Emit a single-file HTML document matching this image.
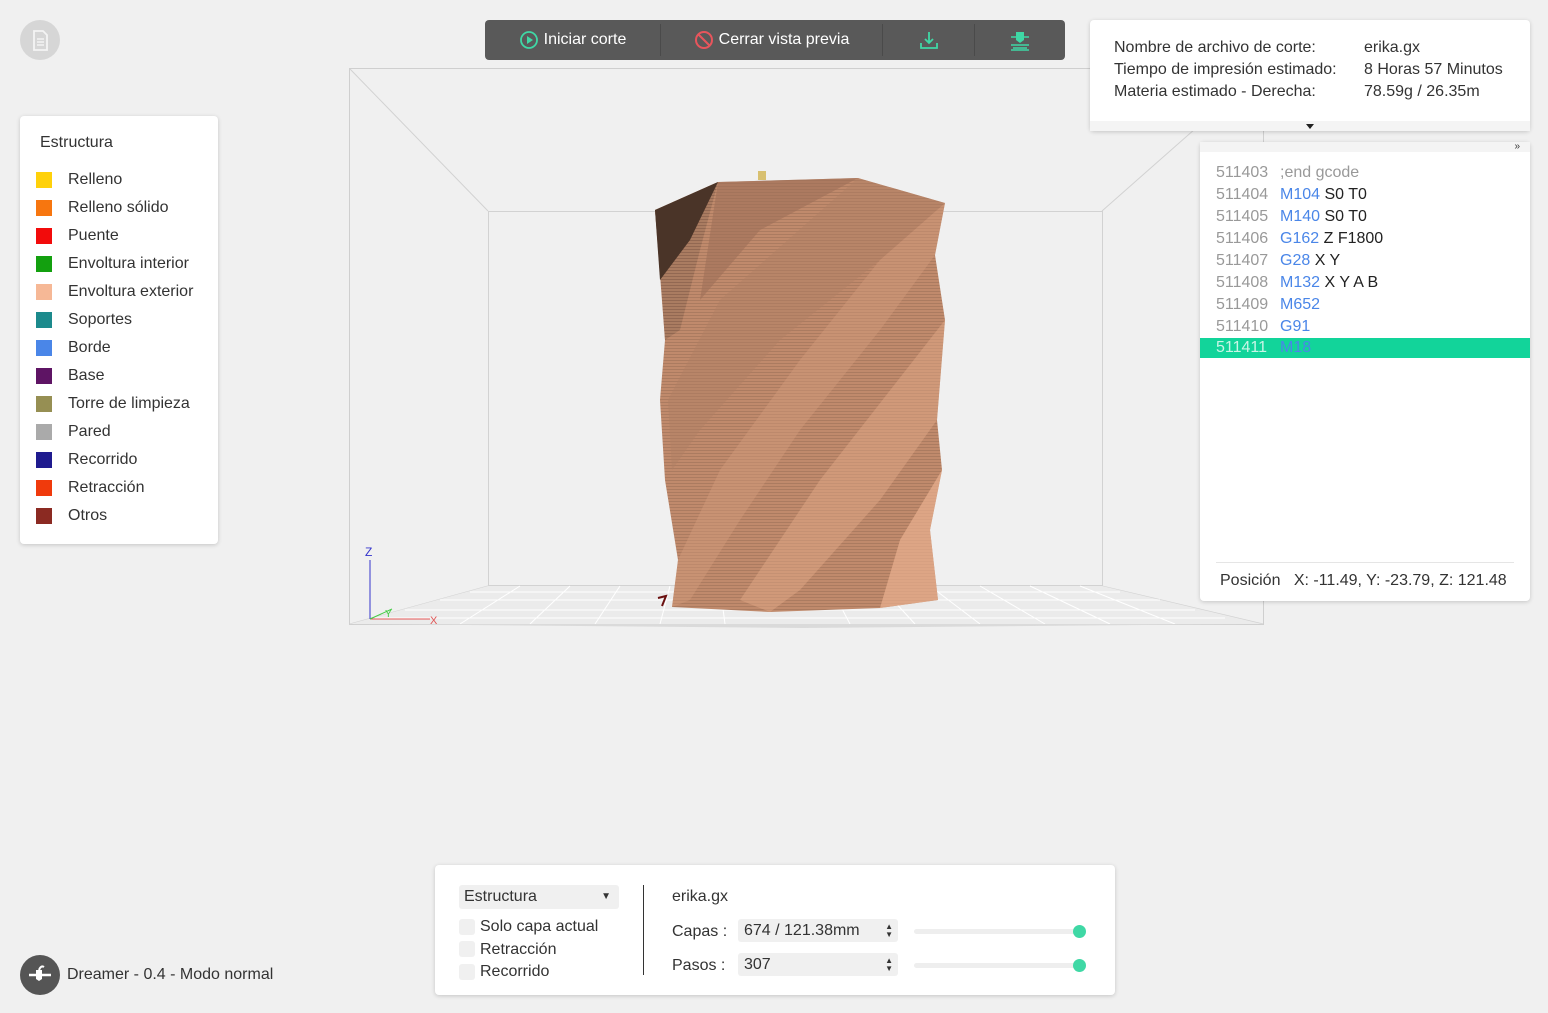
<!DOCTYPE html>
<html><head><meta charset="utf-8"><style>
*{box-sizing:border-box;margin:0;padding:0}
body{width:1548px;height:1013px;background:#f0f0f0;font-family:"Liberation Sans","Noto Sans CJK SC",sans-serif;color:#333;position:relative;overflow:hidden;font-size:15px}
.card{position:absolute;background:#fff;border-radius:4px;box-shadow:0 1px 4px rgba(0,0,0,.18)}
.leg div{height:28px;display:flex;align-items:center;font-size:16px}
.leg span{width:16px;height:16px;margin:0 16px 0 16px;display:inline-block}
.tb{position:absolute;left:485px;top:20px;width:580px;height:40px;background:#595959;border-radius:4px;color:#fff;display:flex;align-items:center;font-size:16px}
.tb .s{border-left:1px solid #4a4a4a;height:32px}
.gc div{height:22px;line-height:22px;font-size:16px;padding-left:16px}
.gc .n{color:#999;display:inline-block;width:64px}
.gc .b{color:#4a86e8}
.gc .t{color:#222}
.cb{display:inline-block;width:16px;height:16px;background:#f0f0f0;border-radius:3px;vertical-align:middle;margin-right:5px}
.inp{position:absolute;background:#f0f0f0;border-radius:3px;height:23px;line-height:23px;padding-left:6px;width:160px;font-size:16px}
.sl{position:absolute;height:5px;background:#eee;border-radius:3px;width:170px}
.sl i{position:absolute;right:-2px;top:-4px;width:13px;height:13px;border-radius:50%;background:#3fd8a5}
</style></head><body>
<div style="position:absolute;left:20px;top:20px;width:40px;height:40px;border-radius:50%;background:#d6d6d6">
<svg width="40" height="40"><path d="M14 11h9l4 4v15h-13z" fill="none" stroke="#f4f4f4" stroke-width="1.8"/><path d="M17 19h7M17 22h7M17 25h7" stroke="#f4f4f4" stroke-width="1.6"/></svg></div>

<div class="card leg" style="left:20px;top:116px;width:198px;height:428px;padding-top:12px">
<div style="padding-left:20px;height:30px;margin-bottom:8px">Estructura</div>
<div><span style="background:#ffd10a"></span>Relleno</div>
<div><span style="background:#f7760f"></span>Relleno sólido</div>
<div><span style="background:#f20b0b"></span>Puente</div>
<div><span style="background:#13a00f"></span>Envoltura interior</div>
<div><span style="background:#f6b896"></span>Envoltura exterior</div>
<div><span style="background:#1c8a8c"></span>Soportes</div>
<div><span style="background:#4a86e8"></span>Borde</div>
<div><span style="background:#5e1464"></span>Base</div>
<div><span style="background:#968f53"></span>Torre de limpieza</div>
<div><span style="background:#aaaaaa"></span>Pared</div>
<div><span style="background:#1f1b8f"></span>Recorrido</div>
<div><span style="background:#f03a0c"></span>Retracción</div>
<div><span style="background:#8b2a22"></span>Otros</div>
</div>

<svg style="position:absolute;left:0;top:0" width="1548" height="1013">
<defs><pattern id="st" width="4" height="3" patternUnits="userSpaceOnUse"><rect width="4" height="3" fill="#c08a6c"/><rect width="4" height="1" fill="#ab7b60"/></pattern>
<pattern id="st2" width="4" height="3" patternUnits="userSpaceOnUse"><rect width="4" height="3" fill="#a87a60"/><rect width="4" height="1" fill="#8f6650"/></pattern></defs>
<rect x="349.5" y="68.5" width="914" height="556" fill="#f0f0f0" stroke="#cfcfcf"/>
<rect x="488.5" y="211.5" width="614" height="374" fill="none" stroke="#d2d2d2"/>
<path d="M350 69L488 211M1263 69L1102 211M350 624L488 586M1263 624L1102 586" stroke="#d2d2d2"/>
<path d="M488 586h614l160 38H350z" fill="#ebebeb"/>
<g stroke="#fff" stroke-width="1"><path d="M470 592h650M440 600h720M405 610h790M375 618h850"/>
<path d="M520 586l-60 38M570 586l-40 38M620 586l-25 38M670 586l-10 38M720 586l5 38M830 586l20 38M880 586l35 38M930 586l50 38M980 586l65 38M1030 586l80 38M1080 586l95 38"/></g>
<path d="M350 624h913l-460 4z" fill="#dadada"/>
<path d="M370 560V619" stroke="#3333cc"/><path d="M370 619H430" stroke="#e05555"/><path d="M370 619l22-10" stroke="#44cc44"/>
<text x="365" y="556" fill="#3333cc" font-size="12">Z</text><text x="430" y="624" fill="#e05555" font-size="11">X</text><text x="385" y="617" fill="#44cc44" font-size="10">Y</text>
<path d="M658 598l8-2-4 10" stroke="#6b1010" stroke-width="2" fill="none"/>
<path d="M655 210L718 182L858 178L945 203L935 255L945 320L937 420L942 470L930 530L938 600L880 608L770 612L672 607L678 560L665 480L660 400L665 340Z" fill="url(#st)"/>
<path d="M655 210L718 182L700 250L680 330L665 340L660 270Z" fill="url(#st2)" opacity=".9"/>
<path d="M655 210L718 182L690 240L660 280Z" fill="#4a3428"/>
<path d="M718 182L858 178L760 230L700 300Z" fill="#9e7058" opacity=".6"/>
<path d="M858 178L945 203L880 260L780 340L700 430L672 470L668 400L720 300Z" fill="#b07f63" opacity=".45"/>
<path d="M945 203L935 255L880 330L800 430L740 520L690 600L672 607L678 560L720 470L800 360L880 260Z" fill="#d39c7c" opacity=".45"/>
<path d="M945 320L937 420L880 500L800 590L770 612L740 600L820 480Z" fill="#e0a886" opacity=".5"/>
<path d="M942 470L930 530L938 600L880 608L900 540Z" fill="#eab090" opacity=".7"/>
<rect x="758" y="171" width="8" height="9" fill="#d8c070"/>
</svg>

<div class="tb">
<div style="width:175px;display:flex;align-items:center;justify-content:center"><svg width="20" height="20" style="margin-right:5px"><circle cx="10" cy="10" r="8" fill="none" stroke="#3fd8a5" stroke-width="1.8"/><path d="M8 6v8l6-4z" fill="#3fd8a5"/></svg>Iniciar corte</div>
<div class="s"></div>
<div style="width:221px;display:flex;align-items:center;justify-content:center"><svg width="20" height="20" style="margin-right:5px"><circle cx="10" cy="10" r="8" fill="none" stroke="#e8555c" stroke-width="2"/><path d="M4.5 4.5l11 11" stroke="#e8555c" stroke-width="2"/></svg>Cerrar vista previa</div>
<div class="s"></div>
<div style="width:91px;display:flex;justify-content:center"><svg width="20" height="20"><path d="M10 2v11M6 9l4 4 4-4M2 13v5h16v-5" fill="none" stroke="#3fd8a5" stroke-width="1.8"/></svg></div>
<div class="s"></div>
<div style="width:90px;display:flex;justify-content:center"><svg width="24" height="24"><path d="M8 4h8v8l-4 3-4-3z" fill="#3fd8a5"/><path d="M3 9h18M3 17h18M5 20h14M3 22h18" stroke="#3fd8a5" stroke-width="1.5"/></svg></div>
</div>

<div class="card" style="left:1090px;top:20px;width:440px;height:111px;line-height:22px;padding:17px 0 0 24px;font-size:16px">
<div style="display:flex"><div style="width:250px">Nombre de archivo de corte:</div><div>erika.gx</div></div>
<div style="display:flex"><div style="width:250px">Tiempo de impresión estimado:</div><div>8 Horas 57 Minutos</div></div>
<div style="display:flex"><div style="width:250px">Materia estimado - Derecha:</div><div>78.59g / 26.35m</div></div>
<div style="position:absolute;left:0;right:0;bottom:0;height:10px;background:#f4f4f4"></div>
<div style="position:absolute;left:216px;bottom:2px;width:0;height:0;border-left:4px solid transparent;border-right:4px solid transparent;border-top:5px solid #222"></div>
</div>

<div class="card gc" style="left:1200px;top:142px;width:330px;height:459px;padding-top:20px">
<div style="position:absolute;left:0;right:0;top:0;height:10px;background:#f4f4f4;font-size:10px;line-height:10px;text-align:right;padding-right:10px">»</div>
<div><span class="n">511403</span><span style="color:#999">;end gcode</span></div>
<div><span class="n">511404</span><span class="b">M104</span> <span class="t">S0 T0</span></div>
<div><span class="n">511405</span><span class="b">M140</span> <span class="t">S0 T0</span></div>
<div><span class="n">511406</span><span class="b">G162</span> <span class="t">Z F1800</span></div>
<div><span class="n">511407</span><span class="b">G28</span> <span class="t">X Y</span></div>
<div><span class="n">511408</span><span class="b">M132</span> <span class="t">X Y A B</span></div>
<div><span class="n">511409</span><span class="b">M652</span></div>
<div><span class="n">511410</span><span class="b">G91</span></div>
<div style="background:#12d49a;height:20px;line-height:20px"><span class="n" style="color:#c8f5e6">511411</span><span class="b">M18</span></div>
<div style="position:absolute;left:16px;right:16px;top:420px;border-top:1px solid #e5e5e5"></div>
<div style="position:absolute;left:20px;top:428px;padding:0;color:#333">Posición&nbsp;&nbsp;&nbsp;X: -11.49, Y: -23.79, Z: 121.48</div>
</div>

<div style="position:absolute;left:20px;top:955px;width:40px;height:40px;border-radius:50%;background:#555"><svg width="40" height="40"><path d="M9 20h22" stroke="#fff" stroke-width="2.5"/><path d="M16 15h6v9l-3 2-3-2z" fill="#fff"/><path d="M19 15q2-5 5-3" stroke="#fff" stroke-width="2" fill="none"/></svg></div>
<div style="position:absolute;left:67px;top:966px;font-size:16px">Dreamer - 0.4 - Modo normal</div>

<div class="card" style="left:435px;top:865px;width:680px;height:130px;font-size:16px">
<div style="position:absolute;left:24px;top:20px;width:160px;height:24px;background:#f0f0f0;border-radius:3px;line-height:24px;padding-left:5px">Estructura<span style="position:absolute;right:8px;font-size:10px">▼</span></div>
<div style="position:absolute;left:24px;top:51px;line-height:22.5px"><div><span class="cb"></span>Solo capa actual</div><div><span class="cb"></span>Retracción</div><div><span class="cb"></span>Recorrido</div></div>
<div style="position:absolute;left:208px;top:20px;width:1px;height:90px;background:#333"></div>
<div style="position:absolute;left:237px;top:23px">erika.gx</div>
<div style="position:absolute;left:237px;top:58px">Capas :</div>
<div style="position:absolute;left:237px;top:92px">Pasos :</div>
<div class="inp" style="left:303px;top:54px">674 / 121.38mm<span style="position:absolute;right:5px;top:0;font-size:8px;line-height:8px;padding-top:4px">▲<br>▼</span></div>
<div class="inp" style="left:303px;top:88px">307<span style="position:absolute;right:5px;top:0;font-size:8px;line-height:8px;padding-top:4px">▲<br>▼</span></div>
<div class="sl" style="left:479px;top:64px"><i></i></div>
<div class="sl" style="left:479px;top:98px"><i></i></div>
</div>
</body></html>
